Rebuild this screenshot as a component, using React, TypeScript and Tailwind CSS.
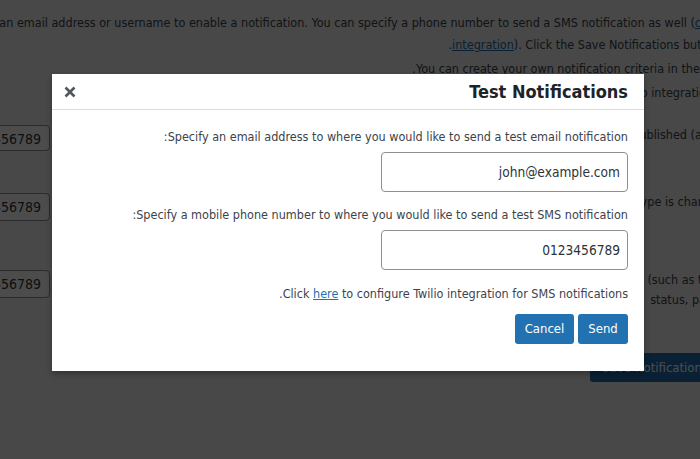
const font = "font-['DejaVu_Sans_Condensed','DejaVu_Sans',sans-serif]";

function PhoneField() {
  return (
    <div className="h-full w-[230px] shrink-0 rounded-[4px] border border-[#8c8f94] bg-white px-[8px] text-[14px] leading-[26px] text-[#2c3338]" dir="ltr">
      <div className="text-right">0123456789</div>
    </div>
  );
}

function BackgroundPage() {
  return (
    <div className={`w-[900px] mr-[-20px] pt-[12px] text-[12.5px] text-[#3c434a] ${font}`}>
      <div className="whitespace-nowrap leading-[22px]">
        Enter an email address or username to enable a notification. You can specify a phone number to send a SMS notification as well (<span className="text-[#2271b1] underline">click</span>
      </div>
      <div className="whitespace-nowrap leading-[22px]">
        <span className="text-[#2271b1] underline">integration</span>). Click the Save Notifications button.
      </div>
      <div className="mt-[2px] whitespace-nowrap leading-[22px]">
        You can create your own notification criteria in the list.
      </div>
      <div className="mt-[2px] mr-[7px] whitespace-nowrap leading-[22px]">
        Use the Test button to check your Twilio integration.
      </div>

      <div className="mt-[21px] flex h-[26px] items-start justify-between">
        <div className="whitespace-nowrap leading-[20px]">A new post is published (any)</div>
        <PhoneField />
      </div>
      <div className="mt-[41px] flex h-[29px] items-start justify-between">
        <div className="mr-[-6px] whitespace-nowrap leading-[20px]">The post type is changed</div>
        <div className="mt-[1px] h-[28px]">
          <PhoneField />
        </div>
      </div>
      <div className="mt-[49px] flex h-[28px] items-start justify-between">
        <div className="leading-[20px]">
          <div className="whitespace-nowrap">Post details are changed (such as title</div>
          <div className="whitespace-nowrap">status, page</div>
        </div>
        <PhoneField />
      </div>
      <div className="mt-[55px]">
        <button className="h-[29px] rounded-[3px] bg-[#2271b1] px-[12px] text-[13px] text-white">Save Notifications</button>
      </div>
    </div>
  );
}

function CloseIcon() {
  return (
    <svg width="12" height="12" viewBox="0 0 12 12" aria-hidden="true">
      <path d="M1.5 1.5 L10.5 10.5 M10.5 1.5 L1.5 10.5" stroke="#50575e" strokeWidth="2.6" strokeLinecap="butt" />
    </svg>
  );
}

function TestDialog() {
  return (
    <div className={`absolute left-[52px] top-[74px] w-[592px] bg-white shadow-[0_3px_6px_rgba(0,0,0,0.3)] ${font}`}>
      <div className="flex h-[36px] items-center justify-between border-b border-[#dcdcde] pl-[11px] pr-[16px]">
        <h1 className="text-[18px] font-bold text-[#1d2327]">Test Notifications</h1>
        <button className="flex h-[20px] w-[14px] items-center justify-center">
          <CloseIcon />
        </button>
      </div>
      <div className="px-[16px] pb-[27px] pt-[18px] text-[12.5px] text-[#3c434a]">
        <label className="block leading-[18px]">Specify an email address to where you would like to send a test email notification:</label>
        <div className="mt-[6px] flex h-[40px] w-[247px] items-center rounded-[4px] border border-[#8c8f94] px-[7px] text-[13.6px] text-[#2c3338]">
          <span dir="ltr">john@example.com</span>
        </div>
        <label className="mt-[14px] block leading-[18px]">Specify a mobile phone number to where you would like to send a test SMS notification:</label>
        <div className="mt-[6px] flex h-[40px] w-[247px] items-center rounded-[4px] border border-[#8c8f94] px-[7px] text-[13.6px] text-[#2c3338]">
          <span dir="ltr">0123456789</span>
        </div>
        <p className="mt-[15px] leading-[18px]">
          Click <a className="text-[#2271b1] underline">here</a> to configure Twilio integration for SMS notifications.
        </p>
        <div className="mt-[11px] flex gap-[4px]">
          <button className="h-[30px] w-[50px] rounded-[3px] bg-[#2271b1] text-[13px] text-white">Send</button>
          <button className="h-[30px] w-[59px] rounded-[3px] bg-[#2271b1] text-[13px] text-white">Cancel</button>
        </div>
      </div>
    </div>
  );
}

export default function App() {
  return (
    <div dir="rtl" className="relative h-[459px] w-[700px] overflow-hidden bg-[#f0f0f1]">
      <BackgroundPage />
      <div className="absolute inset-0 bg-black/70" />
      <TestDialog />
    </div>
  );
}
